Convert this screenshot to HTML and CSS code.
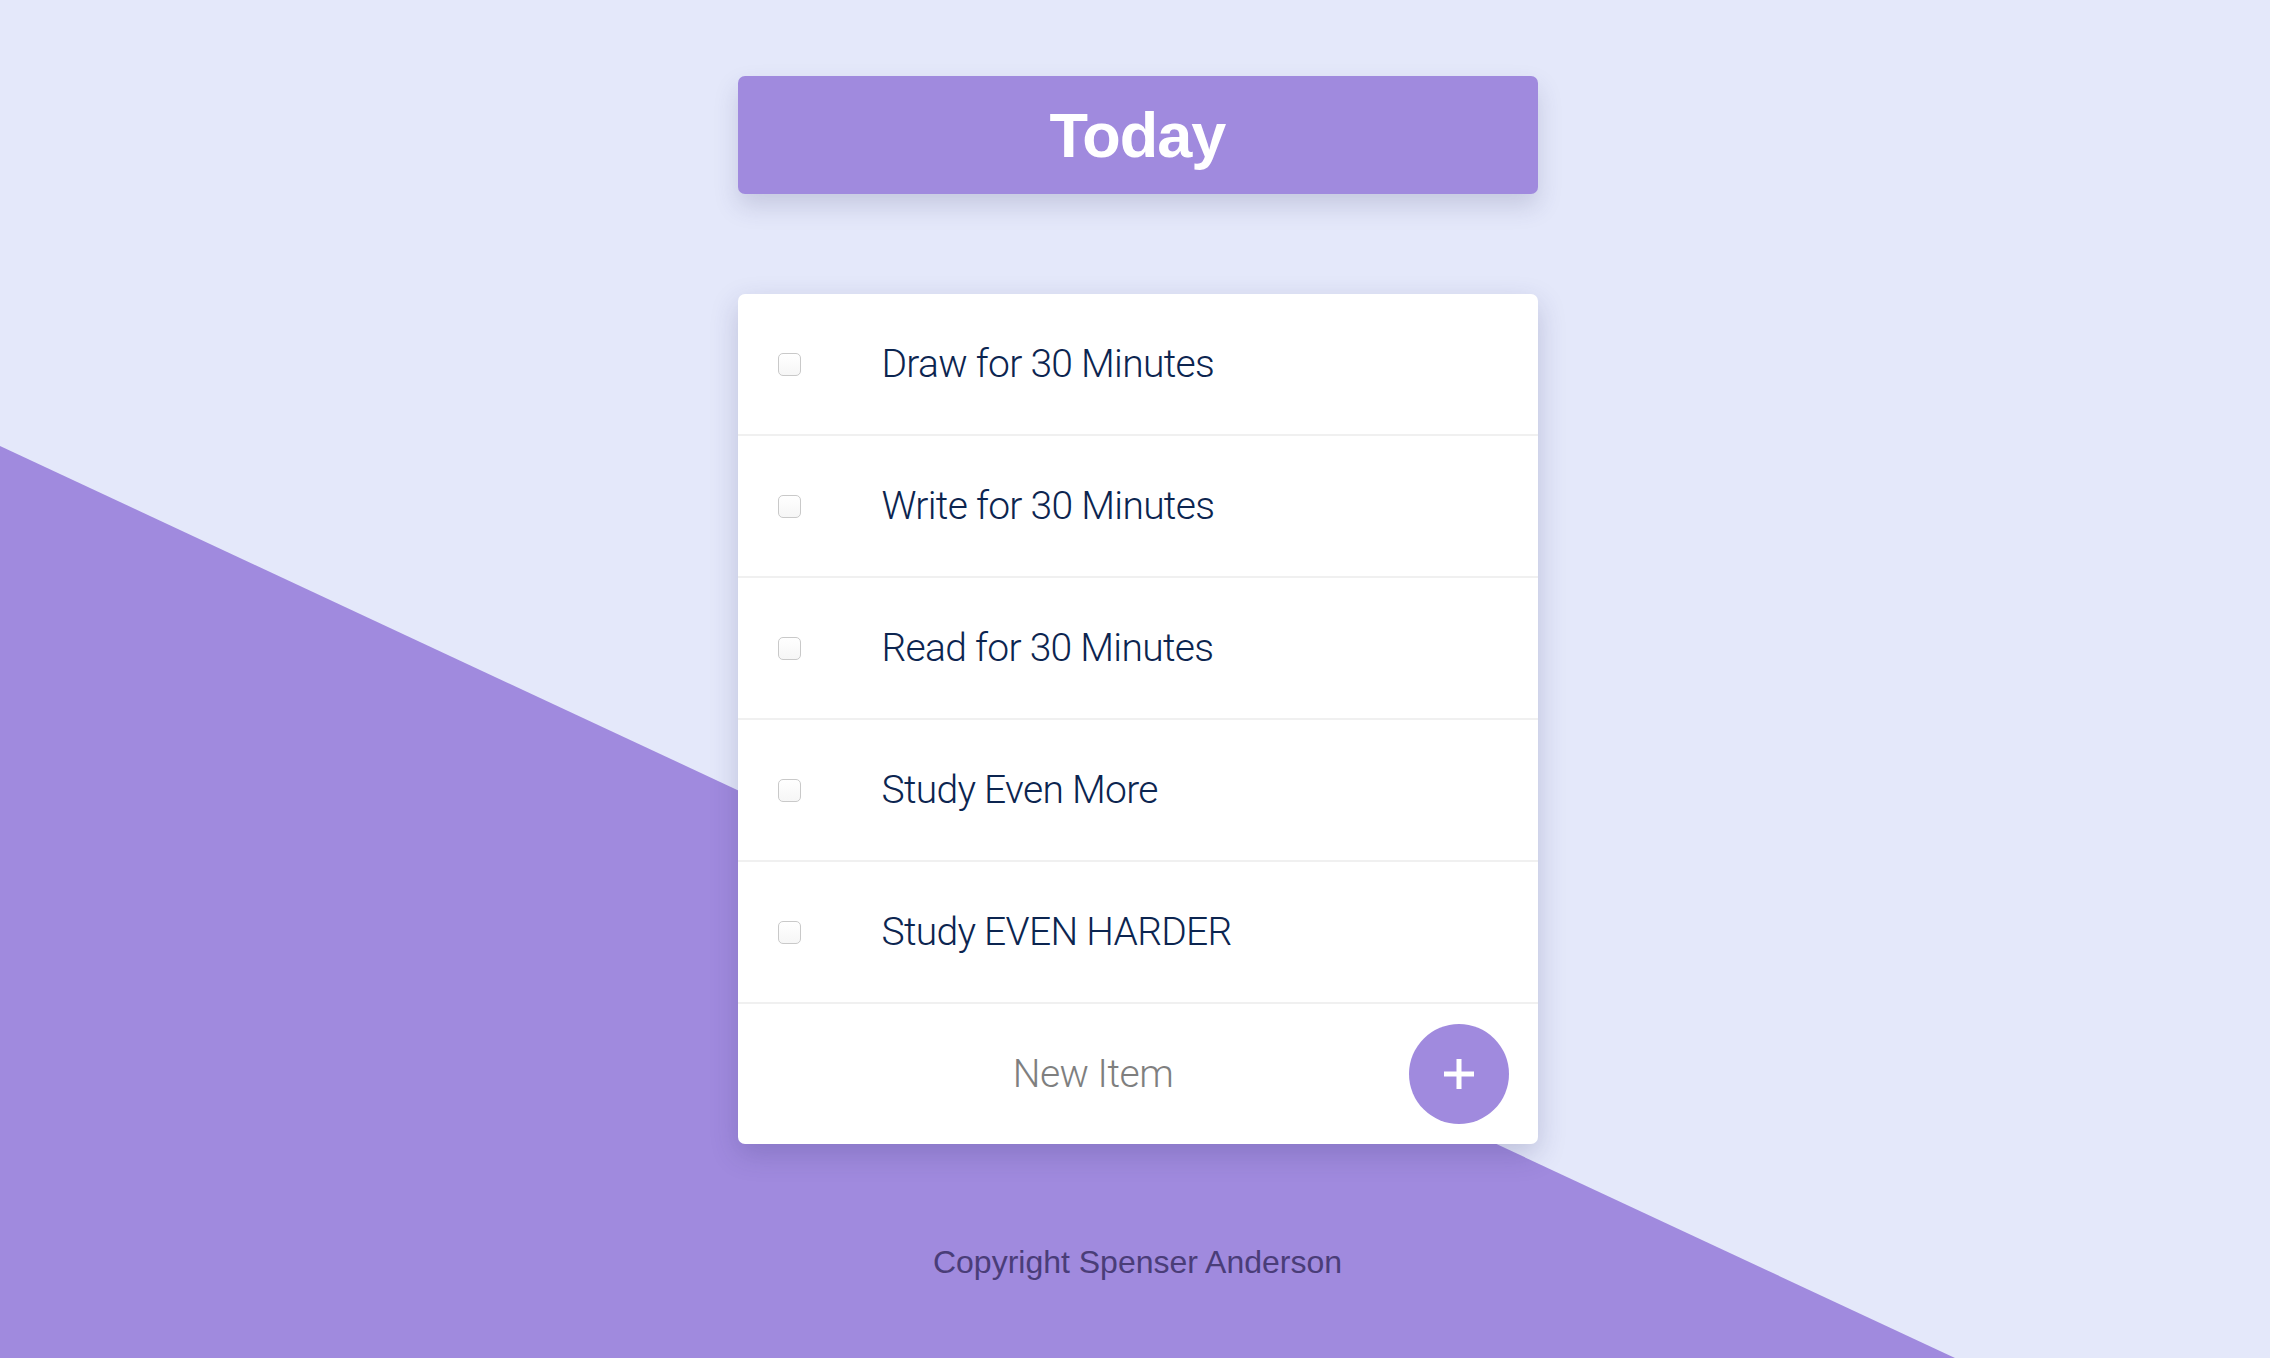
FILE: index.html
```html
<!DOCTYPE html>
<html>
<head>
<meta charset="utf-8">
<title>Today</title>
<link rel="stylesheet" href="styles.css">
</head>
<body>
<div class="bg-slope"></div>
<main class="app">
  <header class="title-bar"><h1 class="title">Today</h1></header>
  <section class="card">
    <div class="row"><span class="check"></span><span class="label">Draw for 30 Minutes</span></div>
    <div class="row"><span class="check"></span><span class="label">Write for 30 Minutes</span></div>
    <div class="row"><span class="check"></span><span class="label">Read for 30 Minutes</span></div>
    <div class="row"><span class="check"></span><span class="label">Study Even More</span></div>
    <div class="row"><span class="check"></span><span class="label">Study EVEN HARDER</span></div>
    <form class="new-row">
      <input class="new-input" type="text" placeholder="New Item">
      <button class="add-btn" type="button" aria-label="Add">
        <svg width="32" height="32" viewBox="0 0 32 32"><rect x="13.5" y="1" width="5" height="30" fill="#fff"/><rect x="1" y="13.5" width="30" height="5" fill="#fff"/></svg>
      </button>
    </form>
  </section>
  <footer class="footer">Copyright Spenser Anderson</footer>
</main>
</body>
</html>
```

FILE: styles.css
```css
html, body {
  margin: 0;
  padding: 0;
  height: 100%;
}
body {
  background: #e4e8fa;
  font-family: "Liberation Sans", Arial, sans-serif;
  overflow: hidden;
  position: relative;
}
.bg-slope {
  position: absolute;
  inset: 0;
  background: #a08ade;
  clip-path: polygon(0 446px, 1955px 100%, 0 100%);
  z-index: 0;
}
.app {
  position: relative;
  z-index: 1;
  width: 800px;
  margin: 0 auto;
  padding-top: 76px;
  padding-left: 5px;
  display: flex;
  flex-direction: column;
}
.title-bar {
  height: 118px;
  background: #a08ade;
  border-radius: 7px;
  box-shadow: 0 12px 24px rgba(60, 60, 110, 0.18);
  display: flex;
  align-items: center;
  justify-content: center;
}
.title {
  margin: 0;
  color: #fff;
  font-family: "Liberation Sans", Arial, sans-serif;
  font-weight: 700;
  font-size: 63px;
  letter-spacing: -1px;
  line-height: 1;
}
.card {
  margin-top: 100px;
  background: #fff;
  border-radius: 7px;
  box-shadow: 0 10px 28px rgba(50, 50, 110, 0.22);
  display: flex;
  flex-direction: column;
}
.row {
  height: 140px;
  border-bottom: 2px solid #f0f0f0;
  display: flex;
  align-items: center;
}
.check {
  width: 21px;
  height: 21px;
  margin-left: 40px;
  border: 1px solid #c9c9c9;
  border-radius: 5px;
  background: linear-gradient(#fff, #f6f6f6);
  flex: none;
}
.label {
  margin-left: 81px;
  font-family: Roboto, "Liberation Sans", sans-serif;
  font-weight: 300;
  font-size: 39px;
  color: #0c2550;
  letter-spacing: -0.7px;
}
.new-row {
  height: 140px;
  margin: 0;
  display: flex;
  align-items: center;
}
.new-input {
  flex: 1;
  min-width: 0;
  border: none;
  outline: none;
  background: transparent;
  text-align: center;
  font-family: Roboto, "Liberation Sans", sans-serif;
  font-weight: 300;
  font-size: 39px;
  letter-spacing: -0.5px;
  color: #333;
  padding: 0 0 0 70px;
}
.new-input::placeholder {
  color: #7f7f7f;
}
.add-btn {
  width: 100px;
  height: 100px;
  margin: 0 29px 0 30px;
  border: none;
  border-radius: 50%;
  background: #a08ade;
  display: flex;
  align-items: center;
  justify-content: center;
  padding: 0;
  flex: none;
}
.footer {
  margin-top: 100px;
  text-align: center;
  font-size: 32px;
  color: #4a3d78;
}
```
